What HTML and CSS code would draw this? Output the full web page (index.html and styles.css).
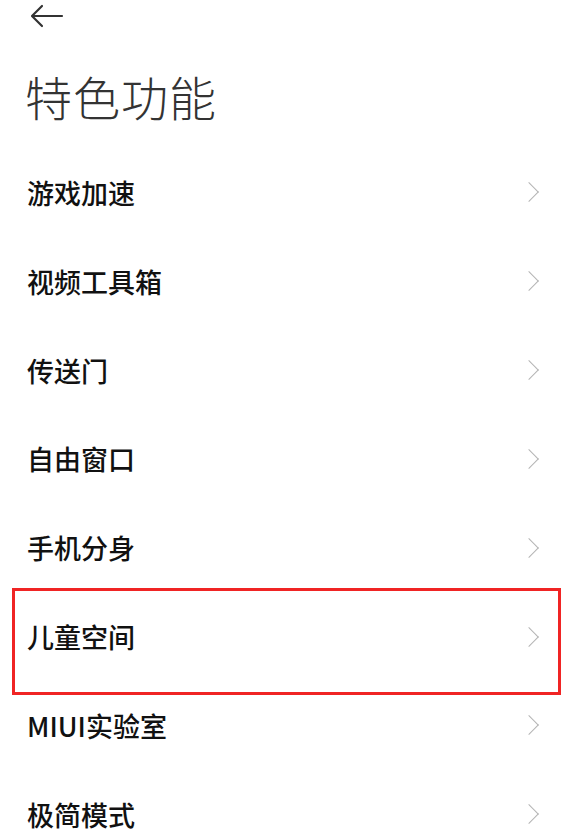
FILE: index.html
```html
<!DOCTYPE html>
<html lang="zh-CN">
<head>
<meta charset="utf-8">
<link rel="stylesheet" href="styles.css">
</head>
<body>
<div class="page">
  <header class="topbar">
    <svg class="back" width="34" height="24" viewBox="0 0 34 24" aria-hidden="true">
      <path d="M32 12H3M12 2L2 12L12 22" fill="none" stroke="#333" stroke-width="2.2" stroke-linecap="round" stroke-linejoin="round"/>
    </svg>
  </header>
  <h1 class="title">特色功能</h1>
  <ul class="list">
    <li class="row"><span class="label">游戏加速</span><span class="chev"></span></li>
    <li class="row"><span class="label">视频工具箱</span><span class="chev"></span></li>
    <li class="row"><span class="label">传送门</span><span class="chev"></span></li>
    <li class="row"><span class="label">自由窗口</span><span class="chev"></span></li>
    <li class="row"><span class="label">手机分身</span><span class="chev"></span></li>
    <li class="row highlighted"><span class="label">儿童空间</span><span class="chev"></span></li>
    <li class="row"><span class="label">MIUI实验室</span><span class="chev"></span></li>
    <li class="row"><span class="label">极简模式</span><span class="chev"></span></li>
  </ul>
</div>
</body>
</html>
```

FILE: styles.css
```css
html, body {
  margin: 0;
  padding: 0;
  background: #fff;
}
body {
  font-family: "Noto Sans CJK SC", "Noto Sans", sans-serif;
  color: #1a1a1a;
  width: 586px;
  height: 837px;
  overflow: hidden;
}
.page {
  display: flex;
  flex-direction: column;
}
.topbar {
  height: 32px;
  display: flex;
  align-items: center;
  padding-left: 30px;
}
.back {
  display: block;
}
.title {
  box-sizing: border-box;
  margin: 0;
  height: 116px;
  padding-top: 10px;
  display: flex;
  align-items: center;
  padding-left: 25px;
  font-size: 47px;
  font-weight: 300;
  color: #333;
  letter-spacing: 1px;
}
.list {
  list-style: none;
  margin: 0;
  padding: 0;
}
.row {
  position: relative;
  height: 88.85px;
  display: flex;
  align-items: center;
  justify-content: space-between;
  padding: 0 50px 0 27px;
}
.label {
  font-size: 27px;
  font-weight: 500;
  color: #111;
}
.chev {
  width: 13px;
  height: 13px;
  border-top: 1.8px solid #b4b4b4;
  border-right: 1.8px solid #b4b4b4;
  transform: rotate(45deg);
  margin-right: 0;
}
.highlighted::after {
  content: "";
  position: absolute;
  left: 12px;
  right: 25px;
  top: -4px;
  bottom: -14px;
  border: 3px solid #f02424;
  pointer-events: none;
}
```
